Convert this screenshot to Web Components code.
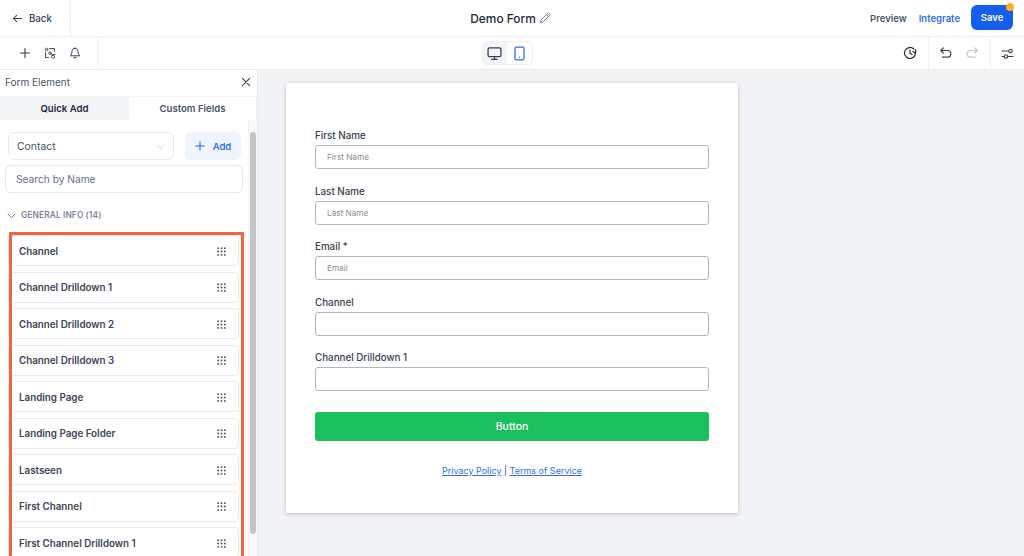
<!DOCTYPE html>
<html>
<head>
<meta charset="utf-8">
<title>Demo Form</title>
<style>
	html, body { margin: 0; height: 556px; overflow: hidden; background: #fff; }
	body { font-family: Inter, "Liberation Sans", sans-serif; color: #1f2937; display: flex; flex-direction: column; }
	.main { flex: 1; display: flex; min-height: 0; }
</style>
</head>
<body>
<app-topbar></app-topbar>
<app-toolbar></app-toolbar>
<div class="main">
	<field-panel>
		<field-item>Channel</field-item>
		<field-item>Channel Drilldown 1</field-item>
		<field-item>Channel Drilldown 2</field-item>
		<field-item>Channel Drilldown 3</field-item>
		<field-item>Landing Page</field-item>
		<field-item>Landing Page Folder</field-item>
		<field-item>Lastseen</field-item>
		<field-item>First Channel</field-item>
		<field-item>First Channel Drilldown 1</field-item>
	</field-panel>
	<form-canvas>
		<form-field label="First Name" placeholder="First Name"></form-field>
		<form-field label="Last Name" placeholder="Last Name"></form-field>
		<form-field label="Email *" placeholder="Email"></form-field>
		<form-field label="Channel"></form-field>
		<form-field label="Channel Drilldown 1"></form-field>
	</form-canvas>
</div>
<script>
(function() {
	const stroke = `fill="none" stroke="currentColor" stroke-linecap="round" stroke-linejoin="round"`;

	class AppTopbar extends HTMLElement {
		constructor() {
			super();
			this.attachShadow({mode: "open"}).innerHTML = `
				<style>
				:host { display: grid; grid-template-columns: 71px 1fr auto; height: 37px; box-sizing: border-box; border-bottom: 1px solid #eceef1; background: #fff; }
				.back { display: flex; align-items: center; gap: 6px; padding-left: 12px; border-right: 1px solid #eceef1; font-size: 9.7px; font-weight: 500; color: #374151; }
				.title { display: flex; align-items: center; justify-content: center; gap: 3px; font-size: 11.9px; font-weight: 500; color: #1f2937; padding-left: 80px; }
				.title svg { color: #6b7280; }
				.actions { display: flex; align-items: center; font-size: 9.5px; font-weight: 600; padding-right: 11px; }
				.preview { color: #4b5563; margin-right: 12px; }
				.integrate { color: #2f6fed; margin-right: 11px; }
				.save { position: relative; width: 42px; height: 25px; margin-top: -1px; background: #155eef; color: #fff; border-radius: 6px; display: flex; align-items: center; justify-content: center; }
				.dot { position: absolute; top: -2px; right: -1px; width: 8px; height: 8px; border-radius: 50%; background: #fdb022; }
				</style>
				<div class="back">
					<svg width="11" height="11" viewBox="0 0 12 12" ${stroke} stroke-width="1.1"><path d="M10.5 6H1.5M5 2.5 1.5 6 5 9.5"/></svg>
					<span>Back</span>
				</div>
				<div class="title">
					<span>Demo Form</span>
					<svg width="12" height="12" viewBox="0 0 12 12" ${stroke} stroke-width="0.9"><path d="M1.5 10.5 2 8 8.5 1.5a1.2 1.2 0 0 1 2 2L4 10Z"/><path d="M7.5 2.5 9.5 4.5"/></svg>
				</div>
				<div class="actions">
					<span class="preview">Preview</span>
					<span class="integrate">Integrate</span>
					<div class="save">Save<span class="dot"></span></div>
				</div>
			`;
		}
	}

	class AppToolbar extends HTMLElement {
		constructor() {
			super();
			this.attachShadow({mode: "open"}).innerHTML = `
				<style>
				:host { display: grid; grid-template-columns: 98px 1fr 68px 1px 61px 1px 33px; height: 33px; box-sizing: border-box; border-bottom: 1px solid #e9ebee; background: #fff; color: #374151; align-items: stretch; }
				.left { display: flex; align-items: center; gap: 13px; padding-left: 19px; border-right: 1px solid #eceef1; }
				.center { display: flex; align-items: center; justify-content: center; }
				.switch { display: flex; width: 51px; height: 24px; margin-left: 56px; border: 1px solid #eef0f3; border-radius: 5px; overflow: hidden; box-sizing: border-box; }
				.switch div { flex: 1; display: flex; align-items: center; justify-content: center; }
				.switch .desk { background: #f2f4f7; color: #344054; }
				.switch .mob { color: #2f6fed; }
				.cell { display: flex; align-items: center; justify-content: center; }
				.clock { justify-content: flex-end; padding-right: 11px; }
				.sep { background: #eceef1; }
				.undo { gap: 12px; padding-right: 2px; }
				.undo svg:last-child { color: #c4c8ce; }
				</style>
				<div class="left">
					<svg width="12" height="12" viewBox="0 0 12 12" ${stroke} stroke-width="1.1"><path d="M6 1.5v9M1.5 6h9"/></svg>
					<svg width="12" height="12" viewBox="0 0 12 12" ${stroke} stroke-width="0.9"><circle cx="2.5" cy="2.5" r="1.3"/><path d="M5.5 1.5h5v3M1.5 5.5v5h3"/><circle cx="6" cy="6.2" r="1.3"/><path d="M8 7.5h3"/><rect x="7.5" y="8.5" width="3" height="2.5" rx=".8"/></svg>
					<svg width="12" height="12" viewBox="0 0 12 12" ${stroke} stroke-width="1"><path d="M6 1.2c-2 0-3 1.5-3 3.3 0 2.2-1.2 3.6-1.7 4.3h9.4C10.2 8.1 9 6.7 9 4.5 9 2.7 8 1.2 6 1.2Z"/><path d="M4.8 10.7h2.4"/></svg>
				</div>
				<div class="center">
					<div class="switch">
						<div class="desk"><svg width="15" height="15" viewBox="0 0 14 14" ${stroke} stroke-width="1.2"><rect x="1" y="1.8" width="12" height="8.2" rx="1.4"/><path d="M4.5 12.5h5M7 10v2.5"/></svg></div>
						<div class="mob"><svg width="15" height="15" viewBox="0 0 14 14" ${stroke} stroke-width="1.2"><rect x="2.8" y="1" width="8.4" height="12" rx="1.5"/><path d="M7 10.5h.01"/></svg></div>
					</div>
				</div>
				<div class="cell clock">
					<svg width="14" height="14" viewBox="0 0 14 14" ${stroke} stroke-width="1.2" style="color:#1f2937"><path d="M12.5 7A5.5 5.5 0 1 1 10.8 3"/><path d="M7 4v3.2l2 1.2M12.8 3.5l-.3 3.5-2.7-1.5"/></svg>
				</div>
				<div class="sep"></div>
				<div class="cell undo">
					<svg width="14" height="14" viewBox="0 0 14 14" ${stroke} stroke-width="1.2" style="color:#374151"><path d="M4.5 1.8 1.8 4.5l2.7 2.7"/><path d="M2 4.5h6.5a3.3 3.3 0 0 1 0 6.700H3.5"/></svg>
					<svg width="14" height="14" viewBox="0 0 14 14" ${stroke} stroke-width="1.2"><path d="M9.5 1.8l2.7 2.7-2.7 2.7"/><path d="M12 4.5H5.5a3.3 3.3 0 0 0 0 6.700H10.5"/></svg>
				</div>
				<div class="sep"></div>
				<div class="cell">
					<svg width="13" height="13" viewBox="0 0 13 13" ${stroke} stroke-width="1.1"><path d="M1 4h6.5M1 9.5h2"/><circle cx="9.5" cy="4" r="1.7"/><circle cx="5" cy="9.5" r="1.7"/><path d="M7 9.5h5"/></svg>
				</div>
			`;
		}
	}

	class FieldPanel extends HTMLElement {
		constructor() {
			super();
			this.attachShadow({mode: "open"}).innerHTML = `
				<style>
				:host { display: flex; flex-direction: column; width: 258px; flex: none; box-sizing: border-box; background: #fff; border-right: 1px solid #e9ebee; overflow: hidden; }
				.head { display: flex; align-items: center; justify-content: space-between; height: 26px; box-sizing: border-box; padding: 0 6px 2px 5px; font-size: 10px; color: #4b5563; flex: none; }
				.tabs { display: grid; grid-template-columns: 129px 127px; height: 24px; flex: none; background: #f4f5f7; font-size: 9.6px; }
				.tabs div { display: flex; align-items: center; justify-content: center; font-weight: 600; }
				.quick { color: #1f2937; }
				.custom { background: #fff; color: #4b5563; margin-top: 1px; border-radius: 2px; }
				.body { flex: 1; min-height: 0; position: relative; padding: 12px 0 0 5px; }
				.row { display: flex; gap: 11px; padding-left: 3px; }
				.select { width: 166px; height: 28px; box-sizing: border-box; border: 1px solid #e8eaed; border-radius: 6px; display: flex; align-items: center; justify-content: space-between; padding: 0 8px; font-size: 10.4px; color: #4b5563; }
				.select svg { color: #c4c8ce; }
				.add { width: 56px; height: 28px; background: #eff4ff; border-radius: 6px; color: #155eef; display: flex; align-items: center; justify-content: center; gap: 8px; font-size: 9.6px; font-weight: 500; }
				.search { width: 238px; height: 28px; box-sizing: border-box; margin-top: 5px; border: 1px solid #e8eaed; border-radius: 6px; display: flex; align-items: center; padding: 0 10px; font-size: 10.2px; color: #667085; }
				.group { display: flex; align-items: center; gap: 5px; height: 14px; margin: 15px 0 0 2px; font-size: 8.4px; font-weight: 600; letter-spacing: .1px; color: #7d8698; }
				.group svg { color: #667085; }
				.list { position: relative; display: flex; flex-direction: column; gap: 5.5px; width: 231px; margin: 13px 0 0 3px; }
				.mark { position: absolute; left: 1px; top: -3px; width: 235px; height: 400px; box-sizing: border-box; border: 3px solid #f4623f; border-radius: 1px; pointer-events: none; }
				.thumb { position: absolute; right: 1px; top: 12px; width: 6px; height: 402px; border-radius: 3px; background: #c4c4c4; }
				.track { position: absolute; right: 0; top: 0; bottom: 0; width: 9px; background: #fafafa; border-left: 1px solid #f0f1f3; box-sizing: border-box; }
				</style>
				<div class="head">
					<span>Form Element</span>
					<svg width="10" height="10" viewBox="0 0 11 11" ${stroke} stroke-width="1.2" style="color:#374151"><path d="M1.5 1.5l8 8M9.5 1.5l-8 8"/></svg>
				</div>
				<div class="tabs"><div class="quick">Quick Add</div><div class="custom">Custom Fields</div></div>
				<div class="body">
					<div class="track"></div>
					<div class="thumb"></div>
					<div class="row">
						<div class="select"><span>Contact</span><svg width="9" height="9" viewBox="0 0 9 9" ${stroke} stroke-width=".8"><path d="M1 3l3.5 3.5L8 3"/></svg></div>
						<div class="add"><svg width="10" height="10" viewBox="0 0 10 10" ${stroke} stroke-width="1"><path d="M5 1v8M1 5h8"/></svg><span>Add</span></div>
					</div>
					<div class="search">Search by Name</div>
					<div class="group"><svg width="9" height="9" viewBox="0 0 9 9" ${stroke} stroke-width=".9"><path d="M1 3l3.5 3.5L8 3"/></svg><span>GENERAL INFO (14)</span></div>
					<div class="list"><slot></slot><div class="mark"></div></div>
				</div>
			`;
		}
	}

	class FieldItem extends HTMLElement {
		constructor() {
			super();
			let dots = "";
			for (let y = 1; y <= 7; y += 3) {
				for (let x = 1; x <= 7; x += 3) dots += `<circle cx="${x}" cy="${y}" r=".85"/>`;
			}
			this.attachShadow({mode: "open"}).innerHTML = `
				<style>
				:host { display: flex; align-items: center; justify-content: space-between; height: 31px; flex: none; box-sizing: border-box; padding: 1px 12px 0 10px; background: #fff; border: 1px solid #e9ebee; border-radius: 4px; font-size: 9.8px; font-weight: 600; color: #3d4555; }
				svg { color: #4b5563; }
				</style>
				<span><slot></slot></span>
				<svg width="9" height="9" viewBox="0 0 8 8" fill="currentColor">${dots}</svg>
			`;
		}
	}

	class FormCanvas extends HTMLElement {
		constructor() {
			super();
			this.attachShadow({mode: "open"}).innerHTML = `
				<style>
				:host { display: block; flex: 1; background: #f2f3f5; padding: 13px 0 0 28px; overflow: hidden; }
				.card { width: 452px; height: 430px; box-sizing: border-box; background: #fff; padding: 47px 29px 0; box-shadow: 0 1px 4px rgba(16,24,40,.22); border-radius: 1px; }
				.fields { display: flex; flex-direction: column; gap: 16.5px; }
				.submit { height: 29px; margin-top: 21px; background: #1abf5e; color: #fff; border-radius: 3px; display: flex; align-items: center; justify-content: center; font-size: 10.5px; font-weight: 500; }
				.links { margin-top: 24px; text-align: center; font-size: 9px; color: #374151; }
				.links a { color: #2f6fed; text-decoration: underline; }
				</style>
				<div class="card">
					<div class="fields"><slot></slot></div>
					<div class="submit">Button</div>
					<div class="links"><a>Privacy Policy</a> | <a>Terms of Service</a></div>
				</div>
			`;
		}
	}

	class FormField extends HTMLElement {
		connectedCallback() {
			if (this.shadowRoot) return;
			this.attachShadow({mode: "open"}).innerHTML = `
				<style>
				:host { display: flex; flex-direction: column; gap: 3px; }
				label { font-size: 9.8px; font-weight: 500; line-height: 12px; color: #374151; }
				.input { height: 24px; box-sizing: border-box; border: 1px solid #b4b7bd; border-radius: 3px; display: flex; align-items: center; padding-left: 11px; font-size: 8.2px; color: #8a8f98; }
				</style>
				<label>${this.getAttribute("label")}</label>
				<div class="input">${this.getAttribute("placeholder") || ""}</div>
			`;
		}
	}

	customElements.define("app-topbar", AppTopbar);
	customElements.define("app-toolbar", AppToolbar);
	customElements.define("field-panel", FieldPanel);
	customElements.define("field-item", FieldItem);
	customElements.define("form-canvas", FormCanvas);
	customElements.define("form-field", FormField);
})();
</script>
</body>
</html>
